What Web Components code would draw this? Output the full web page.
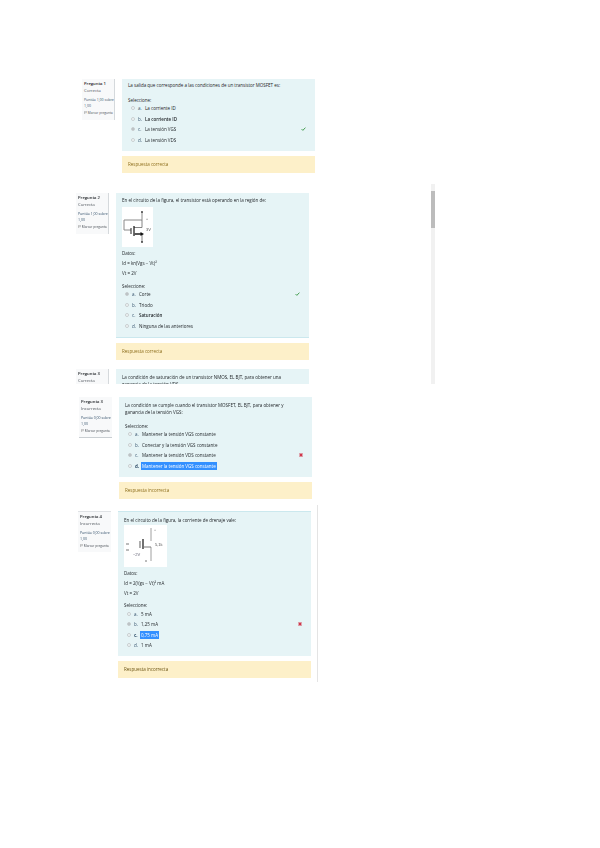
<!DOCTYPE html>
<html lang="es">
<head>
<meta charset="UTF-8">
<title>Cuestionario</title>
<style>
    html, body { margin: 0; background: #fff; }
    body { font-family: "Open Sans", "Liberation Sans", sans-serif; color: #1d2125; }
    main { position: relative; width: 600px; height: 848px; overflow: hidden; padding-top: 79px; box-sizing: border-box; filter: blur(.3px); }
</style>
</head>
<body>
<main>
    <quiz-question side="82" gap="0" style="--main-h:72px;--pad:3px;--label-gap:7.5px">
        <span slot="num">Pregunta 1</span>
        <span slot="state">Correcta</span>
        Puntúa 1,00 sobre<br>1,00
        <span slot="text">La salida que corresponde a las condiciones de un transistor MOSFET es:</span>
        <quiz-option slot="options" letter="a.">La corriente ID</quiz-option>
        <quiz-option slot="options" letter="b." strong>La corriente ID</quiz-option>
        <quiz-option slot="options" letter="c." checked mark="ok">La tensión VGS</quiz-option>
        <quiz-option slot="options" letter="d.">La tensión VDS</quiz-option>
        <span slot="feedback">Respuesta correcta</span>
    </quiz-question>

    <quiz-question side="76" gap="20" style="--main-h:145px;--pad:4px;--label-gap:6px;--main-bottom:1px solid #cbe8ee">
        <span slot="num">Pregunta 2</span>
        <span slot="state">Correcta</span>
        Puntúa 1,00 sobre<br>1,00
        <span slot="text">En el circuito de la figura, el transistor está operando en la región de:</span>
        <circuit-a slot="figure"></circuit-a>
        <div slot="data">Datos:</div>
        <div slot="data">Id = kn(Vgs − Vt)²</div>
        <div slot="data">Vt = 2V</div>
        <quiz-option slot="options" letter="a." checked mark="ok">Corte</quiz-option>
        <quiz-option slot="options" letter="b.">Triodo</quiz-option>
        <quiz-option slot="options" letter="c." strong>Saturación</quiz-option>
        <quiz-option slot="options" letter="d.">Ninguna de las anteriores</quiz-option>
        <span slot="feedback">Respuesta correcta</span>
    </quiz-question>

    <quiz-question side="76" gap="9" cut style="--main-h:15px;--pad:4.5px">
        <span slot="num">Pregunta 3</span>
        <span slot="state">Correcta</span>
        <span slot="text">La condición de saturación de un transistor NMOS, EL BJT, para obtener una<br>ganancia de la tensión VDS</span>
    </quiz-question>

    <quiz-question side="79" gap="13" style="--main-h:80px;--pad:5px;--label-gap:6.5px;--info-right:0;--info-bottom:1px solid #c9ced2">
        <span slot="num">Pregunta 3</span>
        <span slot="state">Incorrecta</span>
        Puntúa 0,00 sobre<br>1,00
        <span slot="text">La condición se cumple cuando el transistor MOSFET, EL BJT, para obtener y<br>ganancia de la tensión VGS:</span>
        <quiz-option slot="options" letter="a.">Mantener la tensión VGS constante</quiz-option>
        <quiz-option slot="options" letter="b.">Conectar y la tensión VGS constante</quiz-option>
        <quiz-option slot="options" letter="c." checked mark="bad">Mantener la tensión VDS constante</quiz-option>
        <quiz-option slot="options" letter="d." selected>Mantener la tensión VGS constante</quiz-option>
        <span slot="feedback">Respuesta incorrecta</span>
    </quiz-question>

    <quiz-question side="78" gap="12" style="--main-h:145px;--pad:5px;--label-gap:5px;--info-right:0;--info-top:1px solid #dfe2e5;--main-top:1px solid #cbe8ee;--fb-color:#6b5414">
        <span slot="num">Pregunta 4</span>
        <span slot="state">Incorrecta</span>
        Puntúa 0,00 sobre<br>1,00
        <span slot="text">En el circuito de la figura, la corriente de drenaje vale:</span>
        <circuit-b slot="figure"></circuit-b>
        <div slot="data">Datos:</div>
        <div slot="data">Id = 2(Vgs − Vt)² mA</div>
        <div slot="data">Vt = 2V</div>
        <quiz-option slot="options" letter="a.">5 mA</quiz-option>
        <quiz-option slot="options" letter="b." checked mark="bad">1,25 mA</quiz-option>
        <quiz-option slot="options" letter="c." selected>0,75 mA</quiz-option>
        <quiz-option slot="options" letter="d.">1 mA</quiz-option>
        <span slot="feedback">Respuesta incorrecta</span>
    </quiz-question>

    <scroll-track></scroll-track>
    <edge-line></edge-line>
</main>

<script>
    class QuizOption extends HTMLElement {
        constructor() {
            super();
            this.attachShadow({ mode: 'open' });
            const mark = this.getAttribute('mark');
            let icon = '';
            if (mark === 'ok') {
                icon = '<svg class="mark" viewBox="0 0 6 5" width="5" height="4"><path d="M.6 2.6 2.2 4.2 5.4.8" fill="none" stroke="#3f9a4a" stroke-width="1.2"/></svg>';
            } else if (mark === 'bad') {
                icon = '<svg class="mark" viewBox="0 0 5 5" width="4" height="4"><path d="M.7.7 4.3 4.3M4.3.7.7 4.3" fill="none" stroke="#d0364a" stroke-width="1.6"/></svg>';
            }
            this.shadowRoot.innerHTML = `
                <style>
                    :host { display: flex; align-items: center; height: 10.6px; padding-left: 3px; font-size: 4.5px; line-height: 6px; position: relative; }
                    .radio { width: 4px; height: 4px; flex: none; border-radius: 50%; border: .5px solid #c8ced0; box-sizing: border-box; background: #f4f8f9; }
                    :host([checked]) .radio { background: #b9c0c3; }
                    .letter { width: 7px; margin-left: 3px; color: #33506b; flex: none; }
                    :host([strong]) .text { font-weight: 600; }
                    :host([selected]) .letter { font-weight: 700; }
                    :host([selected]) .text { background: #3390ff; color: #fff; outline: 1px solid #3390ff; }
                    .text { white-space: nowrap; }
                    .mark { position: absolute; right: 3px; top: 3px; }
                </style>
                <span class="radio"></span><span class="letter">${this.getAttribute('letter')}</span><span class="text"><slot></slot></span>${icon}`;
        }
    }

    class QuizQuestion extends HTMLElement {
        constructor() {
            super();
            this.attachShadow({ mode: 'open' });
            const cut = this.hasAttribute('cut');
            const score = cut ? '' : '<span class="score"><slot></slot></span>';
            const flag = cut ? '' : '<span class="flag"><svg viewBox="0 0 4 4" width="3" height="3"><path d="M.6 4V.4H3.4L2.6 1.4 3.4 2.4H.6" fill="none" stroke="#777" stroke-width=".5"/></svg> Marcar pregunta</span>';
            this.shadowRoot.innerHTML = `
                <style>
                    :host { display: flex; align-items: flex-start; gap: 7px; font-size: 4.5px; line-height: 7px; }
                    .info { width: 33px; height: 41px; flex: none; box-sizing: border-box; padding: 2px 1px 0 2px; background: #f8f9fa; border-right: var(--info-right, 1.5px solid #d5d9dc); border-bottom: var(--info-bottom, 0); border-top: var(--info-top, 0); color: #4a5057; font-size: 4.2px; line-height: 5.4px; overflow: hidden; }
                    .num { font-weight: 600; color: #1d2125; display: block; }
                    .state { display: block; margin-top: 2px; }
                    .score { display: block; margin-top: 3px; font-size: 3.5px; line-height: 6.2px; color: #33506b; white-space: nowrap; }
                    .flag { display: block; margin-top: 2px; font-size: 3.2px; white-space: nowrap; }
                    .col { width: 193px; flex: none; }
                    .body { height: var(--main-h); box-sizing: border-box; padding: var(--pad, 3px) 6px 0; background: #e6f4f6; overflow: hidden; border-bottom: var(--main-bottom, 0); border-top: var(--main-top, 0); }
                    .fb { margin-top: 5px; height: 17px; padding: 0 6px; display: flex; align-items: center; background: #fdf0c9; color: var(--fb-color, #8d6e1c); }
                    ::slotted([slot=data]) { margin-top: 3px; }
                    .label { margin-top: var(--label-gap, 6px); margin-bottom: -.8px; }
                    .q { white-space: nowrap; }
                </style>
                <div class="info" ${cut ? 'style="height:15px"' : ''}>
                    <span class="num"><slot name="num"></slot></span>
                    <span class="state"><slot name="state"></slot></span>
                    ${score}
                    ${flag}
                </div>
                <div class="col">
                    <div class="body">
                        <div class="q"><slot name="text"></slot></div>
                        <slot name="figure"></slot>
                        <slot name="data"></slot>
                        ${cut ? '' : '<div class="label">Seleccione:</div>'}
                        <slot name="options"></slot>
                    </div>
                    ${cut ? '' : '<div class="fb"><slot name="feedback"></slot></div>'}
                </div>`;
            this.style.marginLeft = this.getAttribute('side') + 'px';
        }
        connectedCallback() {
            // gaps between the captures on the sheet
            this.style.marginTop = this.getAttribute('gap') + 'px';
        }
    }

    class CircuitA extends HTMLElement {
        constructor() {
            super();
            this.attachShadow({ mode: 'open' });
            this.shadowRoot.innerHTML = `
                <style>:host { display: block; width: 31px; height: 40px; background: #fff; margin-top: 2.5px; } svg { display: block; }</style>
                <svg viewBox="0 0 31 40" width="31" height="40" fill="none" stroke="#666" stroke-width=".8">
                    <path d="M20 5V13H2V23H9" stroke="#8a8a8a" stroke-width="1"/>
                    <path d="M12 20.5H20V13M12 27H20V35"/>
                    <path d="M12 19V29" stroke="#111" stroke-width="1.2"/>
                    <path d="M9 21V27" stroke="#222" stroke-width="1"/>
                    <path d="M13 27H20" stroke="#111" stroke-width="1.2"/>
                    <path d="M22 27 18.5 25V29Z" fill="#111" stroke="none"/>
                    <circle cx="20" cy="5" r=".9" fill="#333" stroke="none"/>
                    <circle cx="20" cy="35" r=".9" fill="#333" stroke="none"/>
                    <text x="24" y="13" font-size="3.5" font-family="Liberation Sans" fill="#555" stroke="none">+</text>
                    <text x="24" y="24" font-size="4" font-family="Liberation Sans" fill="#555" stroke="none">3V</text>
                </svg>`;
        }
    }

    class CircuitB extends HTMLElement {
        constructor() {
            super();
            this.attachShadow({ mode: 'open' });
            this.shadowRoot.innerHTML = `
                <style>:host { display: block; width: 43px; height: 42px; background: #fff; margin-top: 1px; } svg { display: block; }</style>
                <svg viewBox="0 0 43 42" width="43" height="42" fill="none" stroke="#888" stroke-width=".8">
                    <path d="M27 3V16M27 22V36"/>
                    <path d="M20 22H27" stroke="#555"/>
                    <path d="M21 36H23" stroke="#555"/>
                    <path d="M19 14V24" stroke="#111" stroke-width="1.2"/>
                    <path d="M16 16V23" stroke="#777" stroke-width="1.2"/>
                    <path d="M2 19H5M2 25H5" stroke="#555"/>
                    <text x="31" y="21" font-size="4" font-family="Liberation Sans" fill="#555" stroke="none">5,1k</text>
                    <text x="9" y="31" font-size="4" font-family="Liberation Sans" fill="#667" stroke="none">−2V</text>
                    <text x="30" y="6" font-size="3.5" font-family="Liberation Sans" fill="#777" stroke="none">+</text>
                </svg>`;
        }
    }

    // scrollbar of the captured browser window, lies over the sheet
    class ScrollTrack extends HTMLElement {
        constructor() {
            super();
            this.attachShadow({ mode: 'open' });
            this.shadowRoot.innerHTML = `
                <style>
                    :host { position: absolute; left: 431px; top: 184px; width: 4px; height: 200px; background: #f1f1f1; }
                    div { height: 37px; margin-top: 7px; background: #bcbcbc; }
                </style>
                <div></div>`;
        }
    }

    class EdgeLine extends HTMLElement {
        constructor() {
            super();
            this.attachShadow({ mode: 'open' });
            this.shadowRoot.innerHTML = `
                <style>:host { position: absolute; left: 317px; top: 505px; width: 1px; height: 177px; background: #e4e4e4; }</style>`;
        }
    }

    customElements.define('quiz-option', QuizOption);
    customElements.define('quiz-question', QuizQuestion);
    customElements.define('circuit-a', CircuitA);
    customElements.define('circuit-b', CircuitB);
    customElements.define('scroll-track', ScrollTrack);
    customElements.define('edge-line', EdgeLine);
</script>
</body>
</html>
